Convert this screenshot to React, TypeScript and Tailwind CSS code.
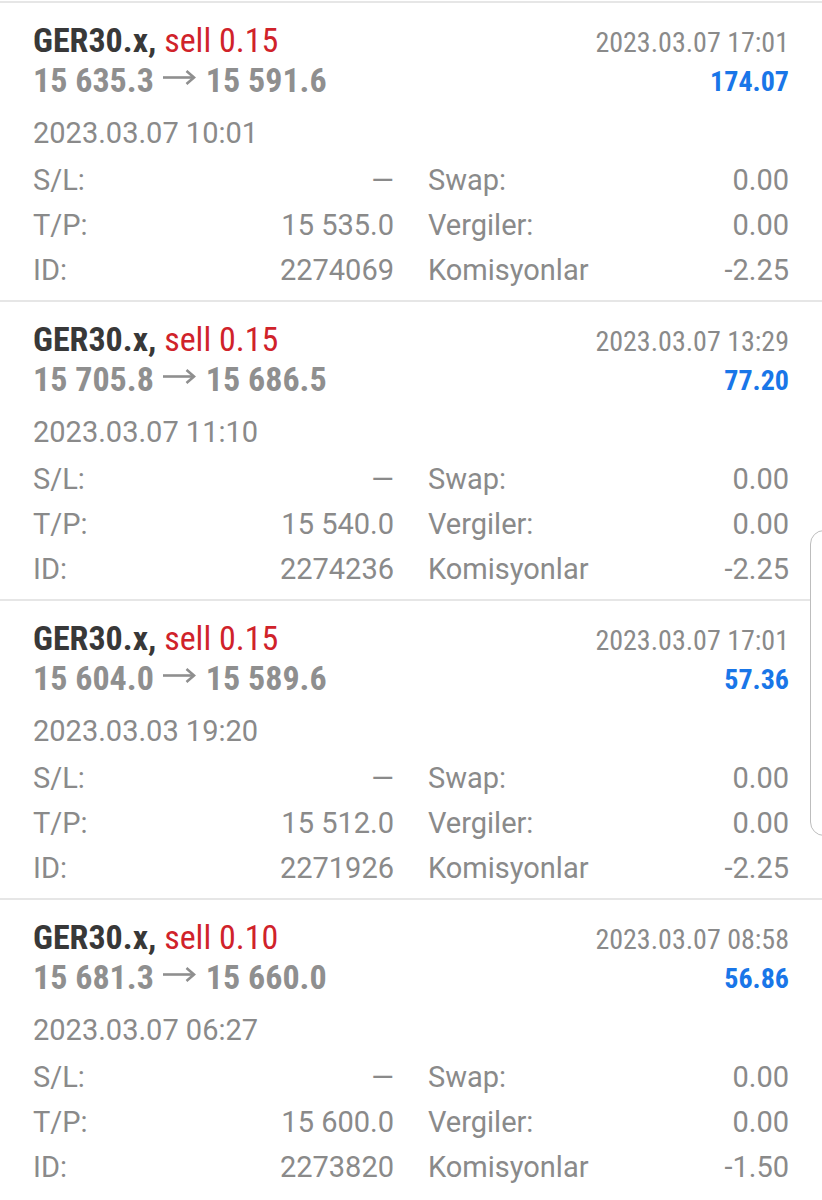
const trades = [
  {
    symbol: 'GER30.x,',
    side: 'sell 0.15',
    open: '15 635.3',
    close: '15 591.6',
    closeTime: '2023.03.07 17:01',
    profit: '174.07',
    openTime: '2023.03.07 10:01',
    sl: '—',
    tp: '15 535.0',
    id: '2274069',
    swap: '0.00',
    taxes: '0.00',
    commission: '-2.25',
  },
  {
    symbol: 'GER30.x,',
    side: 'sell 0.15',
    open: '15 705.8',
    close: '15 686.5',
    closeTime: '2023.03.07 13:29',
    profit: '77.20',
    openTime: '2023.03.07 11:10',
    sl: '—',
    tp: '15 540.0',
    id: '2274236',
    swap: '0.00',
    taxes: '0.00',
    commission: '-2.25',
  },
  {
    symbol: 'GER30.x,',
    side: 'sell 0.15',
    open: '15 604.0',
    close: '15 589.6',
    closeTime: '2023.03.07 17:01',
    profit: '57.36',
    openTime: '2023.03.03 19:20',
    sl: '—',
    tp: '15 512.0',
    id: '2271926',
    swap: '0.00',
    taxes: '0.00',
    commission: '-2.25',
  },
  {
    symbol: 'GER30.x,',
    side: 'sell 0.10',
    open: '15 681.3',
    close: '15 660.0',
    closeTime: '2023.03.07 08:58',
    profit: '56.86',
    openTime: '2023.03.07 06:27',
    sl: '—',
    tp: '15 600.0',
    id: '2273820',
    swap: '0.00',
    taxes: '0.00',
    commission: '-1.50',
  },
];

type Trade = (typeof trades)[number];

function ArrowRight() {
  return (
    <svg width="33" height="15" viewBox="0 0 33 15" fill="none" stroke="currentColor" strokeWidth="2.6">
      <path d="M0 7.5H31" />
      <path d="M23.5 1L31 7.5L23.5 14" strokeLinejoin="miter" />
    </svg>
  );
}

function DetailRow({ label, value }: { label: string; value: string }) {
  return (
    <div className="flex items-center justify-between">
      <span>{label}</span>
      <span>{value}</span>
    </div>
  );
}

function TradeCard({ trade }: { trade: Trade }) {
  return (
    <div className="border-t-2 border-[#e6e6e6] px-[33px] pt-[17px] pb-[7px]">
      <div className="flex justify-between font-['Roboto_Condensed','Roboto',sans-serif] [font-stretch:condensed]">
        <div>
          <div className="text-[34px] leading-[40px]">
            <span className="font-bold text-[#383838]">{trade.symbol}</span>{' '}
            <span className="text-[#d0222a]">{trade.side}</span>
          </div>
          <div className="flex h-[40px] items-center text-[34px] font-bold leading-[40px] text-[#8f8f8f]">
            <span>{trade.open}</span>
            <span className="relative -top-[3px] flex w-[52px] justify-center">
              <ArrowRight />
            </span>
            <span>{trade.close}</span>
          </div>
        </div>
        <div className="pt-[3px] text-right">
          <div className="text-[28px] leading-[40px] text-[#8a8a8a]">{trade.closeTime}</div>
          <div className="text-[28px] font-bold leading-[38px] text-[#1976e8]">{trade.profit}</div>
        </div>
      </div>

      <div className="mt-[12px] text-[29px] leading-[40px] text-[#8a8a8a]">{trade.openTime}</div>

      <div className="mt-[5px] grid grid-cols-2 gap-x-[34px] text-[29px] leading-[45px] text-[#8a8a8a]">
        <DetailRow label="S/L:" value={trade.sl} />
        <DetailRow label="Swap:" value={trade.swap} />
        <DetailRow label="T/P:" value={trade.tp} />
        <DetailRow label="Vergiler:" value={trade.taxes} />
        <DetailRow label="ID:" value={trade.id} />
        <DetailRow label="Komisyonlar" value={trade.commission} />
      </div>
    </div>
  );
}

export default function App() {
  return (
    <div className="relative h-[1200px] w-[822px] overflow-hidden bg-white font-['Roboto',sans-serif]">
      <div className="pt-px">
        {trades.map((t, i) => (
          <TradeCard key={i} trade={t} />
        ))}
      </div>

      {/* edge panel handle */}
      <div className="absolute left-[810px] top-[530px] h-[306px] w-[24px] rounded-l-[14px] border-[1.5px] border-[#bdbdbd] bg-white" />
    </div>
  );
}
